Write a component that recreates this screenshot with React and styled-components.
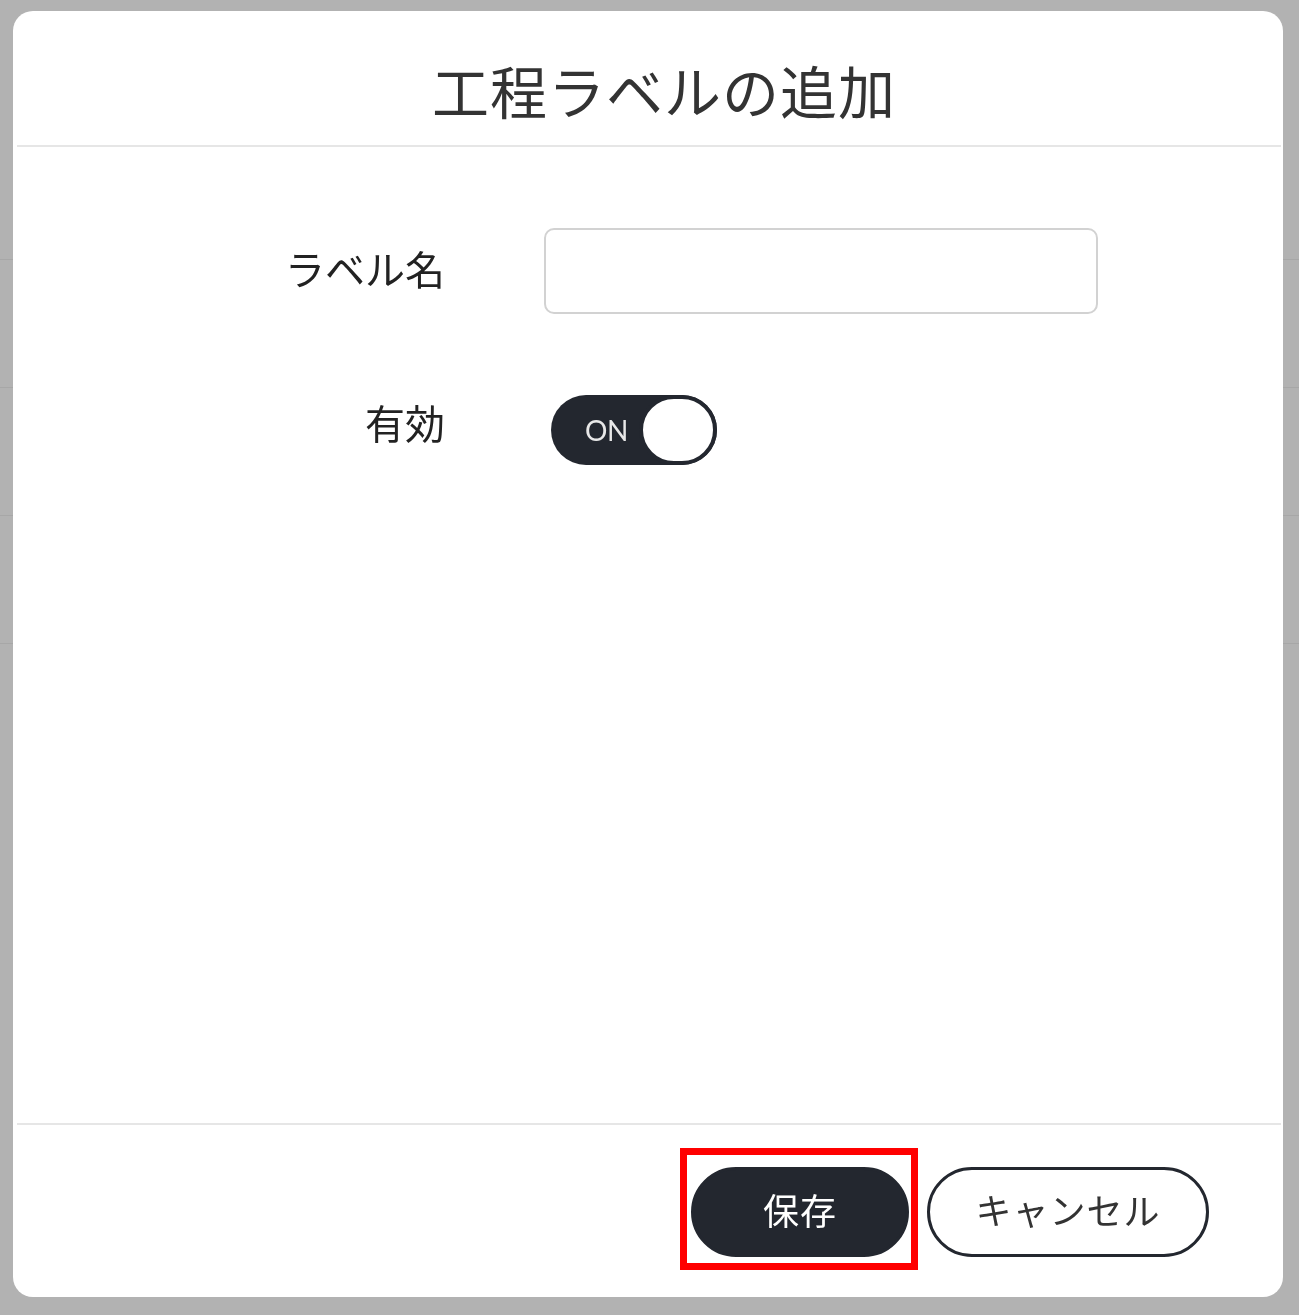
import styled, { createGlobalStyle } from 'styled-components';

const GlobalStyle = createGlobalStyle`
  html, body {
    margin: 0;
    padding: 0;
    background: #ffffff;
  }
  * {
    box-sizing: border-box;
  }
`;

const Page = styled.div`
  width: 1299px;
  height: 1315px;
  padding-top: 132px;
  background: #ffffff;
`;

const PageRow = styled.div`
  height: 128px;
  border-bottom: 1px solid #f0f0f0;
`;

const Overlay = styled.div`
  position: fixed;
  inset: 0;
  background: rgba(0, 0, 0, 0.3);
  padding: 11px 16px 18px 13px;
  display: flex;
  font-family: 'Noto Sans CJK JP', 'Noto Sans', sans-serif;
`;

const Modal = styled.div`
  flex: 1;
  background: #ffffff;
  border-radius: 20px;
  display: flex;
  flex-direction: column;
  overflow: hidden;
`;

const Header = styled.header`
  height: 136px;
  padding: 38px 0 0 30px;
  margin: 0 2px 0 4px;
  border-bottom: 2px solid #e6e6e6;
  text-align: center;
`;

const Title = styled.h1`
  margin: 0;
  font-size: 57px;
  font-weight: 400;
  line-height: 80px;
  color: #333333;
  letter-spacing: 1px;
`;

const Body = styled.div`
  flex: 1;
  display: grid;
  grid-template-columns: 432px 554px;
  grid-auto-rows: min-content;
  column-gap: 99px;
  row-gap: 80px;
  align-items: center;
  padding-top: 81px;
`;

const Label = styled.label`
  text-align: right;
  font-size: 40px;
  line-height: 56px;
  color: #222222;
  padding-bottom: ${(p) => p.$raise * 2}px;
`;

const TextInput = styled.input`
  width: 554px;
  height: 86px;
  border: 2px solid #d2d2d2;
  border-radius: 10px;
  background: #ffffff;
  outline: none;
`;

const Toggle = styled.div`
  margin-left: 7px;
  width: 166px;
  height: 70px;
  border-radius: 35px;
  background: ${(p) => (p.$on ? '#23272f' : '#cccccc')};
  display: flex;
  align-items: center;
  justify-content: space-between;
  padding-left: 34px;
`;

const ToggleText = styled.span`
  font-family: 'Lato', 'Noto Sans', sans-serif;
  font-size: 28px;
  color: #e8e8e8;
  letter-spacing: -0.5px;
`;

const Knob = styled.span`
  width: 78px;
  height: 70px;
  border-radius: 35px;
  background: #ffffff;
  border: 4px solid #23272f;
`;

const Footer = styled.footer`
  margin: 0 2px 0 4px;
  border-top: 2px solid #e6e6e6;
  display: flex;
  justify-content: flex-end;
  gap: 18px;
  padding: 42px 72px 40px 0;
`;

const Highlight = styled.span`
  position: relative;
  display: inline-flex;

  &::after {
    content: '';
    position: absolute;
    inset: -19px -9px -13px -11px;
    border: 7px solid #ff0000;
    pointer-events: none;
  }
`;

const Button = styled.button`
  width: ${(p) => p.$width}px;
  height: 90px;
  border-radius: 45px;
  font-family: 'Noto Sans CJK JP', 'Noto Sans', sans-serif;
  font-size: 36px;
  letter-spacing: 1px;
  cursor: pointer;
  background: ${(p) => (p.$primary ? '#23272f' : '#ffffff')};
  color: ${(p) => (p.$primary ? '#ffffff' : '#333333')};
  border: 3px solid #23272f;
  padding: 0 0 6px;
`;

export default function App() {
  return (
    <>
      <GlobalStyle />
      <Page>
        <PageRow />
        <PageRow />
        <PageRow />
        <PageRow />
      </Page>
      <Overlay>
        <Modal>
          <Header>
            <Title>工程ラベルの追加</Title>
          </Header>
          <Body>
            <Label $raise={3}>ラベル名</Label>
            <TextInput type="text" />
            <Label $raise={8}>有効</Label>
            <Toggle $on>
              <ToggleText>ON</ToggleText>
              <Knob />
            </Toggle>
          </Body>
          <Footer>
            <Highlight>
              <Button $primary $width={218}>保存</Button>
            </Highlight>
            <Button $width={282}>キャンセル</Button>
          </Footer>
        </Modal>
      </Overlay>
    </>
  );
}
